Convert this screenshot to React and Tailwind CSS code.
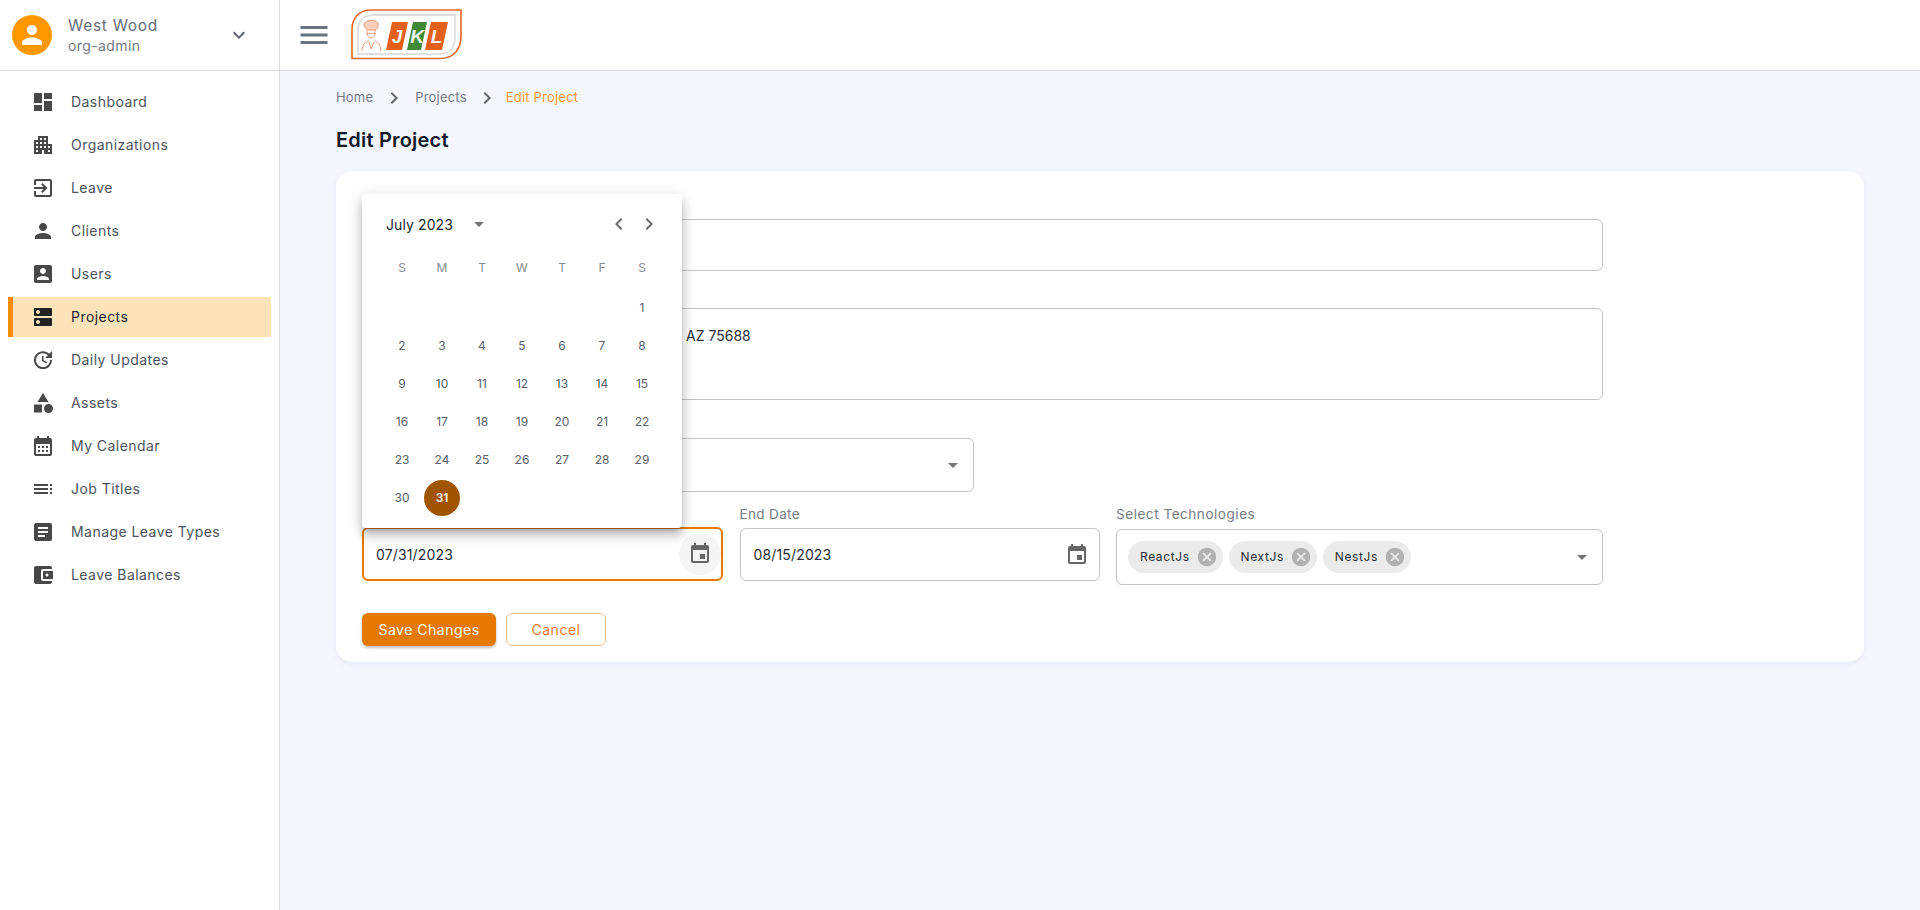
import React from 'react';

const paths = {
  dashboard: 'M3 13h8V3H3v10zm0 8h8v-6H3v6zm10 0h8V11h-8v10zm0-18v6h8V3h-8z',
  apartment: 'M17 11V3H7v4H3v14h8v-4h2v4h8V11h-4zM7 19H5v-2h2v2zm0-4H5v-2h2v2zm0-4H5V9h2v2zm4 4H9v-2h2v2zm0-4H9V9h2v2zm0-4H9V5h2v2zm4 8h-2v-2h2v2zm0-4h-2V9h2v2zm0-4h-2V5h2v2zm4 12h-2v-2h2v2zm0-4h-2v-2h2v2z',
  exit: 'M10.09 15.59L11.5 17l5-5-5-5-1.41 1.41L12.67 11H3v2h9.67l-2.58 2.59zM19 3H5c-1.11 0-2 .9-2 2v4h2V5h14v14H5v-4H3v4c0 1.1.89 2 2 2h14c1.1 0 2-.9 2-2V5c0-1.1-.9-2-2-2z',
  person: 'M12 12c2.21 0 4-1.79 4-4s-1.79-4-4-4-4 1.79-4 4 1.79 4 4 4zm0 2c-2.67 0-8 1.34-8 4v2h16v-2c0-2.66-5.33-4-8-4z',
  accountBox: 'M3 5v14c0 1.1.89 2 2 2h14c1.1 0 2-.9 2-2V5c0-1.1-.9-2-2-2H5c-1.11 0-2 .9-2 2zm12 4c0 1.66-1.34 3-3 3s-3-1.34-3-3 1.34-3 3-3 3 1.34 3 3zm-9 8c0-2 4-3.1 6-3.1s6 1.1 6 3.1v1H6v-1z',
  dns: 'M20 13H4c-.55 0-1 .45-1 1v6c0 .55.45 1 1 1h16c.55 0 1-.45 1-1v-6c0-.55-.45-1-1-1zM7 19c-1.1 0-2-.9-2-2s.9-2 2-2 2 .9 2 2-.9 2-2 2zM20 3H4c-.55 0-1 .45-1 1v6c0 .55.45 1 1 1h16c.55 0 1-.45 1-1V4c0-.55-.45-1-1-1zM7 9c-1.1 0-2-.9-2-2s.9-2 2-2 2 .9 2 2-.9 2-2 2z',
  update: 'M21 10.12h-6.78l2.74-2.82c-2.73-2.7-7.15-2.8-9.88-.1-2.73 2.71-2.73 7.08 0 9.79s7.15 2.71 9.88 0C18.32 15.65 19 14.08 19 12.1h2c0 1.98-.88 4.55-2.64 6.29-3.51 3.48-9.21 3.48-12.72 0-3.5-3.47-3.53-9.11-.02-12.58s9.14-3.47 12.65 0L21 3v7.12zM12.5 8v4.25l3.5 2.08-.72 1.21L11 13V8h1.5z',
  category: 'M12 2l-5.5 9h11zM17.5 13a4.5 4.5 0 1 0 0 9 4.5 4.5 0 0 0 0-9zM3 13.5h8v8H3z',
  calendarMonth: 'M19 4h-1V2h-2v2H8V2H6v2H5c-1.1 0-2 .9-2 2v14c0 1.1.9 2 2 2h14c1.1 0 2-.9 2-2V6c0-1.1-.9-2-2-2zm0 16H5V10h14v10zM9 14H7v-2h2v2zm4 0h-2v-2h2v2zm4 0h-2v-2h2v2zm-8 4H7v-2h2v2zm4 0h-2v-2h2v2zm4 0h-2v-2h2v2z',
  toc: 'M3 9h14V7H3v2zm0 4h14v-2H3v2zm0 4h14v-2H3v2zm16 0h2v-2h-2v2zm0-10v2h2V7h-2zm0 6h2v-2h-2v2z',
  article: 'M19 3H5c-1.1 0-2 .9-2 2v14c0 1.1.9 2 2 2h14c1.1 0 2-.9 2-2V5c0-1.1-.9-2-2-2zm-5 14H7v-2h7v2zm3-4H7v-2h10v2zm0-4H7V7h10v2z',
  wallet: 'M21 18v1c0 1.1-.9 2-2 2H5c-1.11 0-2-.9-2-2V5c0-1.1.89-2 2-2h14c1.1 0 2 .9 2 2v1h-9c-1.11 0-2 .9-2 2v8c0 1.1.89 2 2 2h9zm-9-2h10V8H12v8zm4-2.5c-.83 0-1.5-.67-1.5-1.5s.67-1.5 1.5-1.5 1.5.67 1.5 1.5-.67 1.5-1.5 1.5z',
  event: 'M17 12h-5v5h5v-5zM16 1v2H8V1H6v2H5c-1.11 0-1.99.9-1.99 2L3 19c0 1.1.89 2 2 2h14c1.1 0 2-.9 2-2V5c0-1.1-.9-2-2-2h-1V1h-2zm3 18H5V8h14v11z',
  cancel: 'M12 2C6.47 2 2 6.47 2 12s4.47 10 10 10 10-4.47 10-10S17.53 2 12 2zm5 13.59L15.59 17 12 13.41 8.41 17 7 15.59 10.59 12 7 8.41 8.41 7 12 10.59 15.59 7 17 8.41 13.41 12 17 15.59z',
  dropDown: 'M7 10l5 5 5-5z',
  left: 'M15.41 7.41L14 6l-6 6 6 6 1.41-1.41L10.83 12z',
  right: 'M10 6L8.59 7.41 13.17 12l-4.58 4.59L10 18l6-6z',
  menu: 'M3 18h18v-2H3v2zm0-5h18v-2H3v2zm0-7v2h18V6H3z',
  expand: 'M16.59 8.59L12 13.17 7.41 8.59 6 10l6 6 6-6z',
};

const Icon = ({ name, className }) => (
  <svg viewBox="0 0 24 24" fill="currentColor" className={className}>
    <path d={paths[name]} />
  </svg>
);

const navItems = [
  ['Dashboard', 'dashboard'],
  ['Organizations', 'apartment'],
  ['Leave', 'exit'],
  ['Clients', 'person'],
  ['Users', 'accountBox'],
  ['Projects', 'dns'],
  ['Daily Updates', 'update'],
  ['Assets', 'category'],
  ['My Calendar', 'calendarMonth'],
  ['Job Titles', 'toc'],
  ['Manage Leave Types', 'article'],
  ['Leave Balances', 'wallet'],
];

const weeks = [
  ['', '', '', '', '', '', 1],
  [2, 3, 4, 5, 6, 7, 8],
  [9, 10, 11, 12, 13, 14, 15],
  [16, 17, 18, 19, 20, 21, 22],
  [23, 24, 25, 26, 27, 28, 29],
  [30, 31, '', '', '', '', ''],
];

const Logo = () => (
  <svg width="112" height="52" viewBox="0 0 112 52" className="block">
    <path d="M1 49.5V21C1 9 8 1 20 1H110V27C110 41 102 49.5 89 49.5Z" fill="#fff" stroke="#e4672a" strokeWidth="1.6" />
    <path d="M7 45V22C7 11 12 6 23 6H104V28C104 39 98 45 88 45Z" fill="#fff" stroke="#e0e0e0" strokeWidth="1.8" />
    <g fill="none" stroke="#ee9a77" strokeWidth="1">
      <path d="M13 15c1-4 11-5 14-1 1 3-1 6-3 7h-7c-2-1-4-3-4-6z" fill="#f9d0bc" />
      <path d="M16 21c0 5 1 8 4 8s4-3 4-8" />
      <path d="M15 25c3-1 7-1 10 0" />
      <path d="M11 42c0-6 3-9 7-10M30 42c0-5-2-8-6-10M18 33l2 7 3-7" />
    </g>
    <path d="M41 13H57L51 41H35Z" fill="#e4601a" />
    <path d="M62 13H76L70 41H56Z" fill="#3f8a37" />
    <path d="M80 13H97L91 41H74Z" fill="#e4601a" />
    <g fill="#f4f4f4" fontFamily="'Liberation Sans', sans-serif" fontSize="19" fontWeight="700" fontStyle="italic" textAnchor="middle">
      <text x="46" y="34">J</text>
      <text x="66" y="34">K</text>
      <text x="85.5" y="34">L</text>
    </g>
  </svg>
);

const Sidebar = () => (
  <aside className="w-[280px] shrink-0 bg-white border-r border-[#dcdcdc] flex flex-col">
    <div className="h-[71px] shrink-0 border-b border-[#dcdcdc] flex items-center pl-3 pr-[28px]">
      <div className="w-10 h-10 rounded-full bg-[#ff9800] flex items-center justify-center text-white">
        <Icon name="person" className="w-[30px] h-[30px]" />
      </div>
      <div className="ml-[16px] flex-1 -mt-[1px]">
        <div className="text-[15.5px] leading-[22px] tracking-[0.7px] text-[#666c78]">West Wood</div>
        <div className="text-[14px] leading-[18px] tracking-[0.4px] text-[#757b87]">org-admin</div>
      </div>
      <Icon name="expand" className="w-6 h-6 text-[#5f6570]" />
    </div>
    <nav className="pt-[11px] flex flex-col gap-[3px]">
      {navItems.map(([label, icon]) => {
        const active = label === 'Projects';
        return (
          <div
            key={label}
            className={`mx-2 h-10 flex items-center gap-4 border-l-[5px] pl-[18px] text-[14px] tracking-[0.45px] ${
              active ? 'bg-[#fde3ba] border-[#fb8c00] text-[#1f2430]' : 'border-transparent text-[#4d5360]'
            }`}
          >
            <Icon name={icon} className={`w-6 h-6 shrink-0 ${active ? 'text-[#222]' : 'text-[#484848]'}`} />
            <span className="-mt-[2px]">{label}</span>
          </div>
        );
      })}
    </nav>
  </aside>
);

const DatePopover = () => (
  <div className="absolute left-[26px] top-[23px] w-80 h-[334px] bg-white rounded shadow-[0_5px_5px_-3px_rgba(0,0,0,0.2),0_8px_10px_1px_rgba(0,0,0,0.14),0_3px_14px_2px_rgba(0,0,0,0.12)] z-10">
    <div className="flex items-center h-[30px] mt-[15px] pl-6 pr-[21px]">
      <span className="text-[14px] tracking-[0.1px] text-[#1b1f2a]">July 2023</span>
      <Icon name="dropDown" className="w-6 h-6 text-[#757575] ml-[14px]" />
      <div className="ml-auto flex gap-[6px]">
        <Icon name="left" className="w-6 h-6 text-[#6b6b6b]" />
        <Icon name="right" className="w-6 h-6 text-[#6b6b6b]" />
      </div>
    </div>
    <div className="grid grid-cols-[repeat(7,40px)] justify-center mt-[19px] h-5 items-center text-center text-[12px] text-[#868b96]">
      {['S', 'M', 'T', 'W', 'T', 'F', 'S'].map((d, i) => (
        <span key={i}>{d}</span>
      ))}
    </div>
    <div className="mt-[12px] flex flex-col gap-[2px]">
      {weeks.map((week, i) => (
        <div key={i} className="grid grid-cols-[repeat(7,40px)] justify-center">
          {week.map((day, j) => (
            <div key={j} className="h-9 flex items-center justify-center text-[12px] text-[#5a606c]">
              {day === 31 ? (
                <span className="w-9 h-9 rounded-full bg-[#a05400] text-white font-semibold flex items-center justify-center">31</span>
              ) : (
                day
              )}
            </div>
          ))}
        </div>
      ))}
    </div>
  </div>
);

const Chip = ({ label }) => (
  <div className="h-8 rounded-full bg-[#ebebeb] flex items-center pl-3 pr-[5px] text-[12px] tracking-[0.6px] text-[#2a2d38]">
    <span>{label}</span>
    <Icon name="cancel" className="w-[22px] h-[22px] ml-[6px] text-[#b1b1b1]" />
  </div>
);

const EditForm = () => (
  <div className="relative bg-white rounded-2xl h-[491px] pt-12 px-[26px] shadow-[0_2px_6px_rgba(60,70,110,0.08)]">
    <DatePopover />
    <div className="w-[1241px] h-[52px] border border-[#c4c4c4] rounded-md" />
    <div className="w-[1241px] h-[92px] mt-[37px] border border-[#c4c4c4] rounded-md pl-[323px] pt-[15px] text-[14px] leading-[24px] text-[#2a2d38]">
      AZ 75688
    </div>
    <div className="w-[612px] h-[54px] mt-[38px] border border-[#c4c4c4] rounded-md flex items-center justify-end pr-[8px]">
      <Icon name="dropDown" className="w-6 h-6 text-[#757575]" />
    </div>
    <div className="grid grid-cols-[361px_360px_487px] gap-x-[16.5px] w-[1241px] mt-[12px] items-start">
      <div className="pt-[23px]">
        <div className="h-[54px] border-2 border-[#e67a00] rounded-md flex items-center pl-[12px] justify-between text-[14px] tracking-[0.15px] text-[#2a2d38]">
          <span>07/31/2023</span>
          <span className="w-[42px] h-[42px] rounded-full bg-[#f5f5f5] flex items-center justify-center">
            <Icon name="event" className="w-6 h-6 text-[#666]" />
          </span>
        </div>
      </div>
      <div>
        <div className="h-5 text-[13.5px] leading-5 tracking-[0.35px] text-[#767b86] mb-[4px]">End Date</div>
        <div className="h-[53px] border border-[#c4c4c4] rounded-md flex items-center pl-[13px] pr-[10px] justify-between text-[14px] tracking-[0.15px] text-[#2a2d38]">
          <span>08/15/2023</span>
          <Icon name="event" className="w-6 h-6 text-[#666]" />
        </div>
      </div>
      <div>
        <div className="h-5 text-[13.5px] leading-5 tracking-[0.55px] text-[#767b86] mb-[5px]">Select Technologies</div>
        <div className="h-[56px] border border-[#c4c4c4] rounded-md flex items-center gap-[6px] pl-[11px] pr-[8px]">
          <Chip label="ReactJs" />
          <Chip label="NextJs" />
          <Chip label="NestJs" />
          <Icon name="dropDown" className="w-6 h-6 text-[#757575] ml-auto" />
        </div>
      </div>
    </div>
    <div className="flex gap-[10px] mt-[28px]">
      <button className="w-[134px] h-[33px] rounded-md bg-[#e67a00] text-white text-[14px] tracking-[0.5px] shadow-[0_2px_3px_rgba(0,0,0,0.25)]">
        Save Changes
      </button>
      <button className="w-[100px] h-[33px] rounded-md border border-[#f5c08e] text-[#ea7a2a] text-[14px] tracking-[0.5px]">
        Cancel
      </button>
    </div>
  </div>
);

export default function App() {
  return (
    <div className="flex h-[910px] overflow-hidden bg-[#f4f7fe] font-['Inter',sans-serif]">
      <Sidebar />
      <div className="flex-1 flex flex-col min-w-0">
        <header className="h-[71px] shrink-0 bg-white border-b border-[#dcdcdc] flex items-center pl-[16px]">
          <Icon name="menu" className="w-[36px] h-[36px] text-[#6b7280]" />
          <div className="ml-[19px]">
            <Logo />
          </div>
        </header>
        <main className="flex-1 px-[56px]">
          <div className="flex items-center h-5 mt-[17px] text-[13px] tracking-[0.2px] text-[#767b86]">
            <span>Home</span>
            <Icon name="right" className="w-6 h-6 mx-[9px] text-[#666]" />
            <span>Projects</span>
            <Icon name="right" className="w-6 h-6 ml-[8px] mr-[7px] text-[#666]" />
            <span className="text-[#fb9a1f]">Edit Project</span>
          </div>
          <h1 className="mt-[18px] text-[20px] leading-[28px] font-semibold tracking-[0.2px] text-[#111827]">Edit Project</h1>
          <div className="mt-[17px]">
            <EditForm />
          </div>
        </main>
      </div>
    </div>
  );
}
